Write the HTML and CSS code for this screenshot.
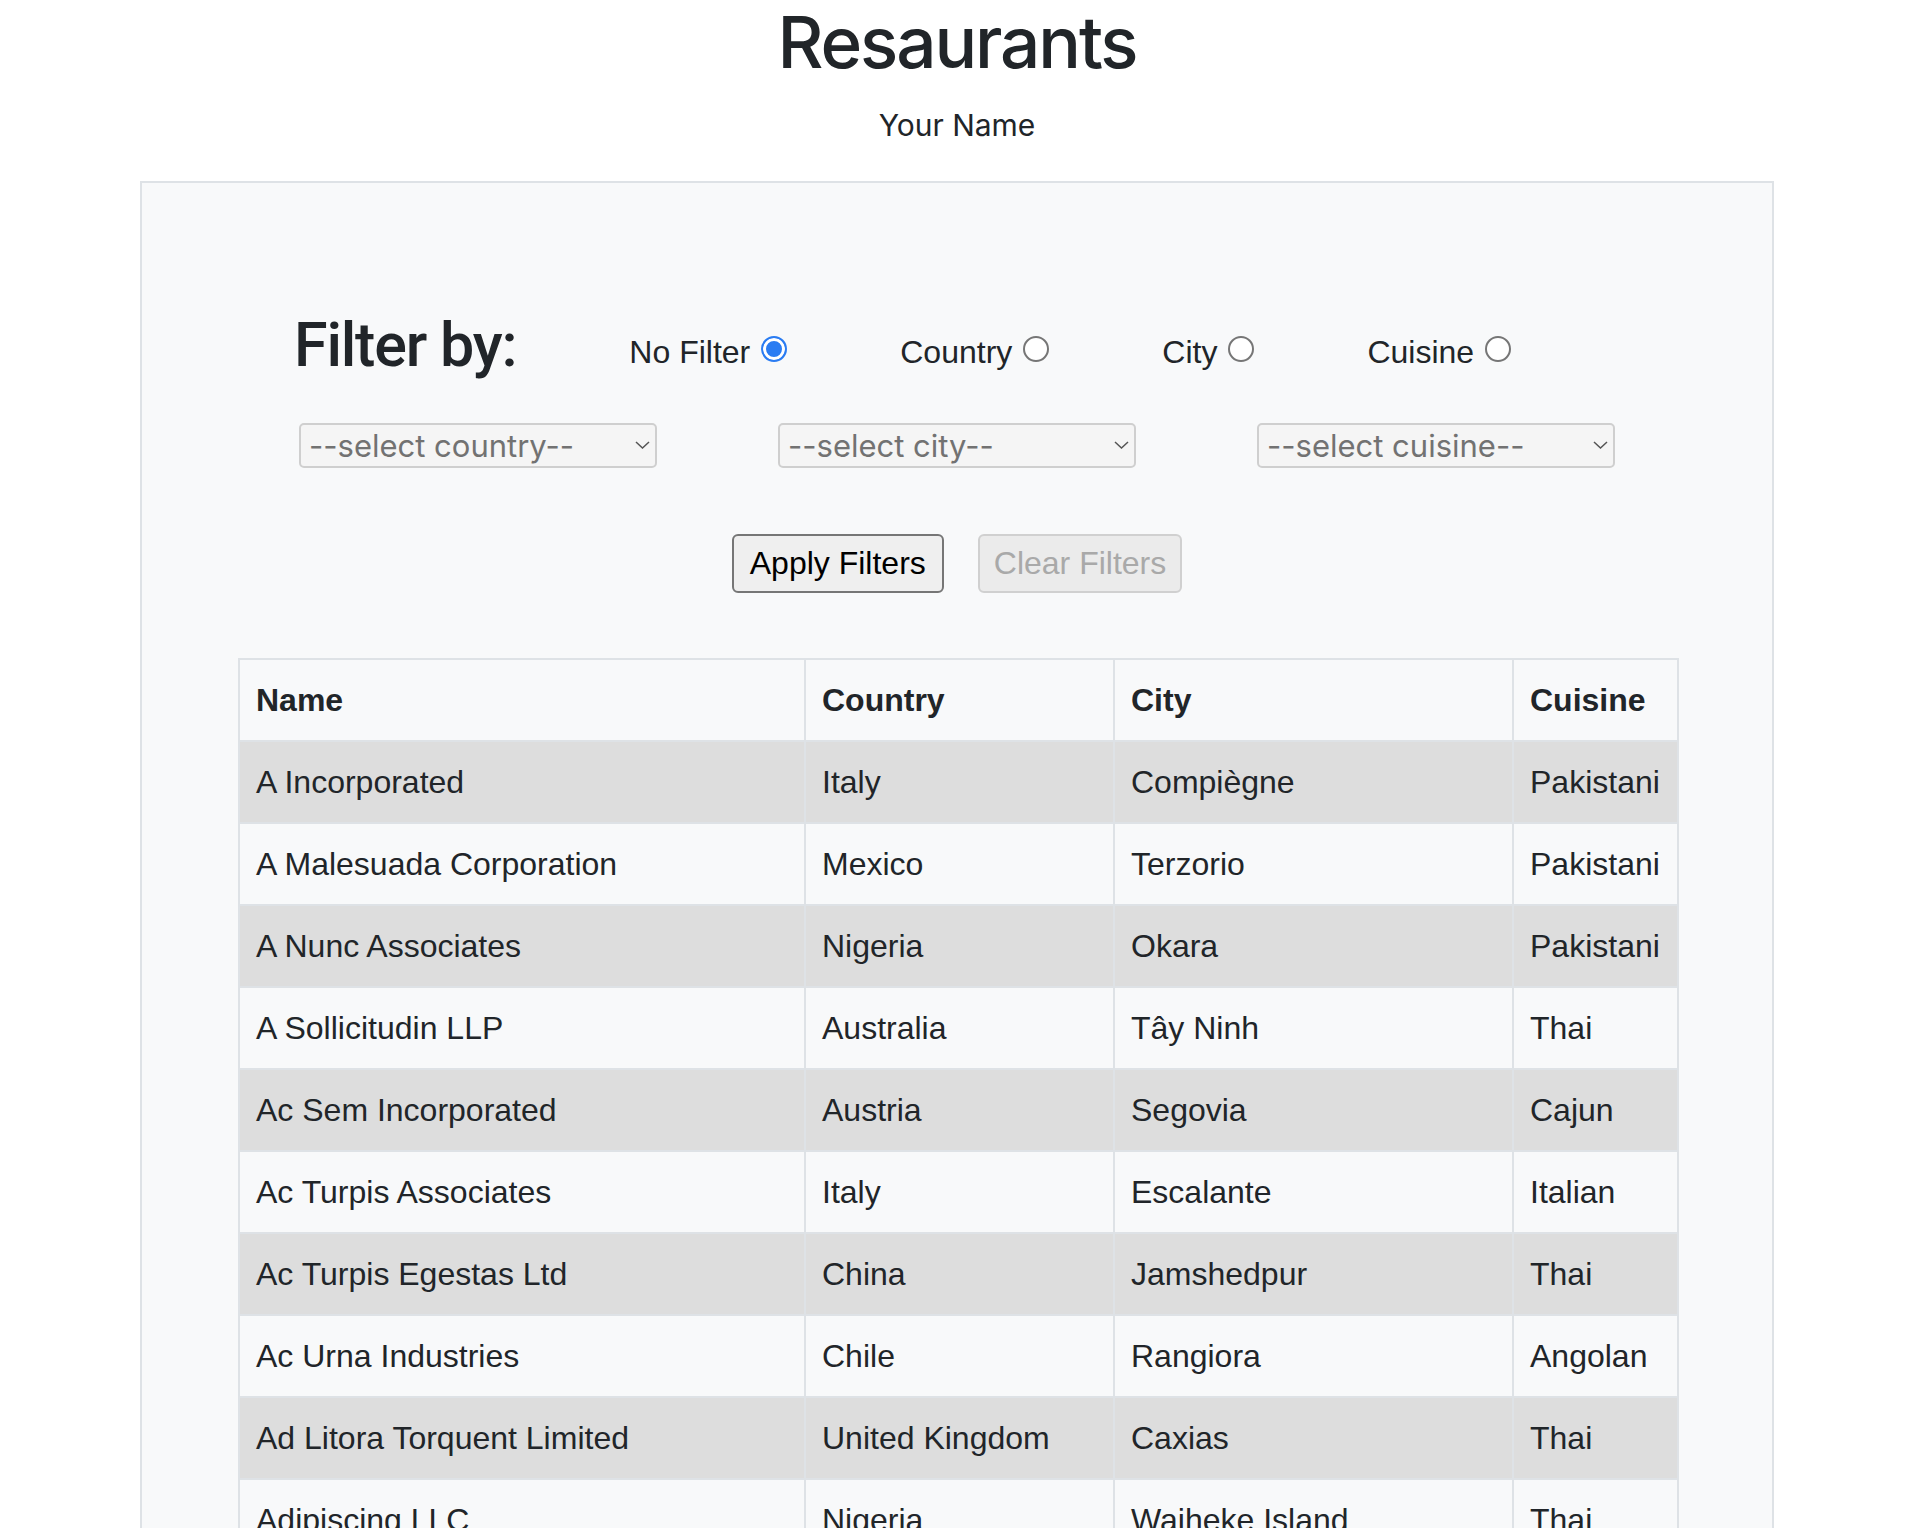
FILE: index.html
```html
<!DOCTYPE html>
<html lang="en">
<head>
<meta charset="utf-8">
<title>Resaurants</title>
<link rel="stylesheet" href="styles.css">
</head>
<body>
<header class="page-head">
  <h1 class="title">Resaurants</h1>
  <p class="author">Your Name</p>
</header>
<main class="panel">
  <div class="filter-row">
    <h2 class="filter-title">Filter by:</h2>
    <label class="opt">No Filter <input type="radio" name="f" class="radio" checked></label>
    <label class="opt">Country <input type="radio" name="f" class="radio"></label>
    <label class="opt">City <input type="radio" name="f" class="radio"></label>
    <label class="opt">Cuisine <input type="radio" name="f" class="radio"></label>
  </div>
  <div class="select-row">
    <div class="select-wrap">
      <select class="sel"><option>--select country--</option></select>
      <svg class="chev" viewBox="0 0 15 8" width="15" height="8"><path d="M1 1 L7.5 7 L14 1" fill="none" stroke="#555" stroke-width="1.5"/></svg>
    </div>
    <div class="select-wrap">
      <select class="sel"><option>--select city--</option></select>
      <svg class="chev" viewBox="0 0 15 8" width="15" height="8"><path d="M1 1 L7.5 7 L14 1" fill="none" stroke="#555" stroke-width="1.5"/></svg>
    </div>
    <div class="select-wrap">
      <select class="sel"><option>--select cuisine--</option></select>
      <svg class="chev" viewBox="0 0 15 8" width="15" height="8"><path d="M1 1 L7.5 7 L14 1" fill="none" stroke="#555" stroke-width="1.5"/></svg>
    </div>
  </div>
  <div class="btn-row">
    <button class="btn btn-apply">Apply Filters</button>
    <button class="btn btn-off" disabled>Clear Filters</button>
  </div>
  <table class="grid">
    <colgroup>
      <col class="c-name"><col class="c-country"><col class="c-city"><col class="c-cuisine">
    </colgroup>
    <thead>
      <tr><th>Name</th><th>Country</th><th>City</th><th>Cuisine</th></tr>
    </thead>
    <tbody>
      <tr><td>A Incorporated</td><td>Italy</td><td>Compiègne</td><td>Pakistani</td></tr>
      <tr><td>A Malesuada Corporation</td><td>Mexico</td><td>Terzorio</td><td>Pakistani</td></tr>
      <tr><td>A Nunc Associates</td><td>Nigeria</td><td>Okara</td><td>Pakistani</td></tr>
      <tr><td>A Sollicitudin LLP</td><td>Australia</td><td>Tây Ninh</td><td>Thai</td></tr>
      <tr><td>Ac Sem Incorporated</td><td>Austria</td><td>Segovia</td><td>Cajun</td></tr>
      <tr><td>Ac Turpis Associates</td><td>Italy</td><td>Escalante</td><td>Italian</td></tr>
      <tr><td>Ac Turpis Egestas Ltd</td><td>China</td><td>Jamshedpur</td><td>Thai</td></tr>
      <tr><td>Ac Urna Industries</td><td>Chile</td><td>Rangiora</td><td>Angolan</td></tr>
      <tr><td>Ad Litora Torquent Limited</td><td>United Kingdom</td><td>Caxias</td><td>Thai</td></tr>
      <tr><td>Adipiscing LLC</td><td>Nigeria</td><td>Waiheke Island</td><td>Thai</td></tr>
      <tr><td>Aenean Eget Corp.</td><td>Peru</td><td>Lima</td><td>Peruvian</td></tr>
      <tr><td>Aliquam Erat Inc.</td><td>Canada</td><td>Ottawa</td><td>Italian</td></tr>
    </tbody>
  </table>
</main>
</body>
</html>
```

FILE: styles.css
```css
html, body {
  margin: 0;
  padding: 0;
  background: #ffffff;
}

body {
  font-family: "Liberation Sans", Arial, sans-serif;
  color: #212529;
  font-size: 32px;
}

.page-head {
  text-align: center;
}

.title {
  margin: 0 0 18px;
  font-family: Inter, "Liberation Sans", sans-serif;
  font-weight: 500;
  font-size: 71px;
  line-height: 1.2;
  letter-spacing: -2.1px;
}

.author {
  margin: 0 0 33px;
  font-family: Inter, "Liberation Sans", sans-serif;
  font-size: 30px;
  line-height: 1.5;
}

.panel {
  margin: 0 140px;
  border: 2px solid #dee2e6;
  background: #f8f9fa;
  padding-top: 126px;
  padding-bottom: 60px;
}

.filter-row {
  display: flex;
  align-items: flex-end;
  gap: 113px;
  padding-left: 152px;
}

.filter-title {
  margin: 0;
  font-family: Roboto, "Liberation Sans", sans-serif;
  font-weight: 500;
  font-size: 61px;
  line-height: 1.2;
  letter-spacing: -1.2px;
}

.opt {
  display: inline-flex;
  align-items: center;
  gap: 11px;
  line-height: 48px;
  margin-bottom: 6px;
}

.radio {
  appearance: none;
  -webkit-appearance: none;
  margin: 0;
  width: 26px;
  height: 26px;
  border-radius: 50%;
  border: 2px solid #767676;
  background: #ffffff;
  box-sizing: border-box;
  position: relative;
  top: -3px;
}

.radio:checked {
  border-color: #2a7cf2;
  background: #2a7cf2;
  box-shadow: inset 0 0 0 3px #ffffff;
}

.select-row {
  display: flex;
  justify-content: space-between;
  padding: 0 157px;
  margin-top: 41px;
}

.select-wrap {
  position: relative;
  width: 358px;
  height: 45px;
}

.sel {
  appearance: none;
  -webkit-appearance: none;
  width: 100%;
  height: 100%;
  box-sizing: border-box;
  margin: 0;
  padding: 0 8px;
  border: 2px solid #cfcfcf;
  border-radius: 5px;
  background: #f5f5f5;
  color: #727272;
  font-family: Inter, "Liberation Sans", sans-serif;
  font-size: 31px;
}

.chev {
  position: absolute;
  right: 7px;
  top: 18px;
  pointer-events: none;
}

.btn-row {
  display: flex;
  justify-content: center;
  gap: 34px;
  margin-top: 66px;
}

.btn {
  font-family: "Liberation Sans", Arial, sans-serif;
  font-size: 32px;
  line-height: 37px;
  padding: 9px 14px;
  height: 59px;
  box-sizing: border-box;
  border: 2px solid #767676;
  border-radius: 6px;
  background: #efefef;
  color: #000000;
}

.btn-apply {
  padding: 9px 16px;
}

.btn-off {
  border-color: #d0d0d0;
  background: #ebebeb;
  color: #a9a9a9;
}

.grid {
  margin: 65px 96px 0;
  width: calc(100% - 192px);
  border-collapse: collapse;
  table-layout: fixed;
  border: 2px solid #dee2e6;
}

.c-name { width: 566px; }
.c-country { width: 309px; }
.c-city { width: 399px; }
.c-cuisine { width: 165px; }

.grid th,
.grid td {
  border: 2px solid #dee2e6;
  padding: 16px;
  line-height: 48px;
  text-align: left;
  white-space: nowrap;
  background: #f8f9fa;
}

.grid th {
  font-weight: 700;
}

.grid tbody tr:nth-child(odd) td {
  background: #dddddd;
}
```
